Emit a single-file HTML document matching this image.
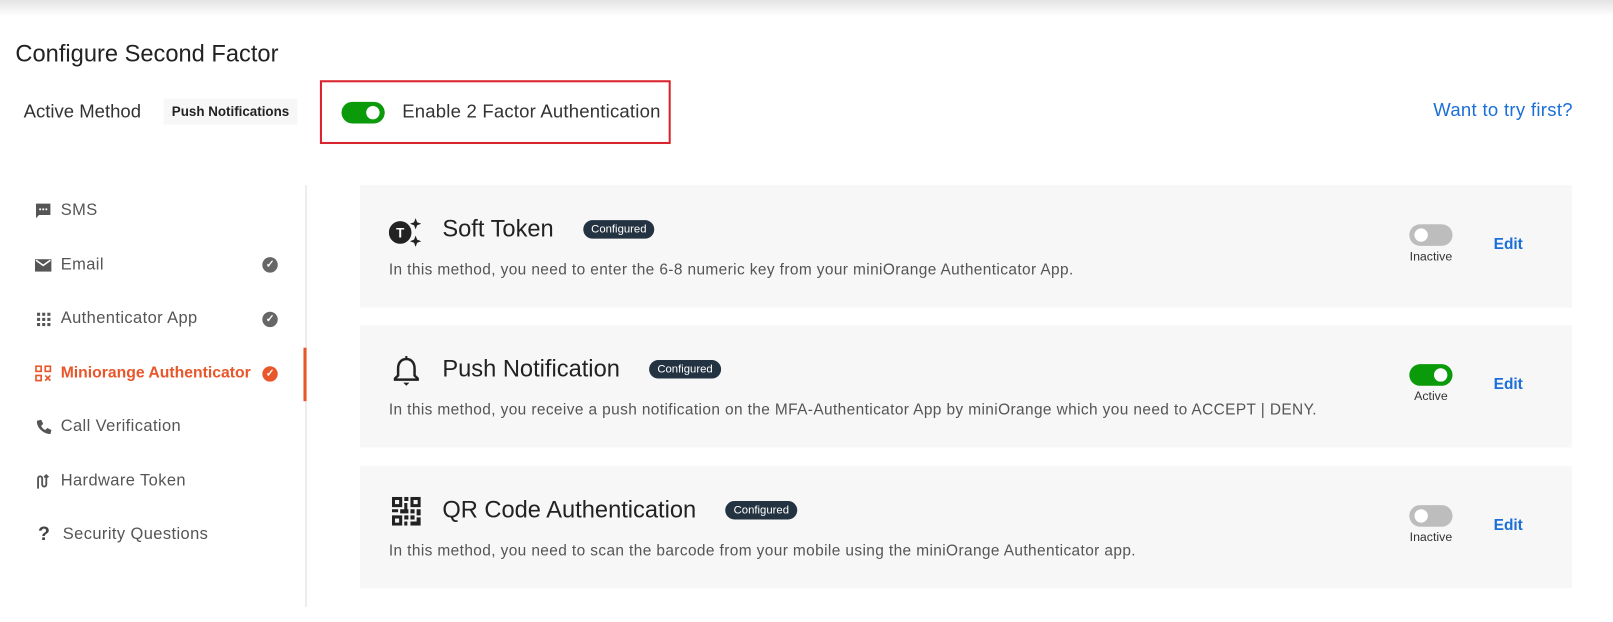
<!DOCTYPE html><html><head><style>
body{margin:0;width:1613px;height:622px;background:#fff;font-family:"Liberation Sans",sans-serif;position:relative;overflow:hidden}
#w{position:absolute;left:0;top:0;width:1568px;height:605px;transform:scale(1.0287);transform-origin:0 0}
.a{position:absolute}
.top{left:0;top:0;width:1568px;height:16px;background:linear-gradient(#e4e4e4,#fff)}
.nav{left:34px;font-size:16px;letter-spacing:.4px;color:#555;display:flex;align-items:center}
.nav svg{width:16px;height:16px;margin-right:9px}
.chk{left:255px;width:15px;height:15px;border-radius:50%;background:#666;color:#fff;font-size:10px;text-align:center;line-height:15px;font-weight:bold}
.card{left:350px;width:1178px;height:119px;background:#f7f7f7}
.ttl{left:80px;top:29px;font-size:23px;color:#222}
.bdg{background:#243342;color:#fff;font-size:11px;border-radius:10px;padding:3px 8px;letter-spacing:0}
.desc{left:28px;top:74px;font-size:15px;letter-spacing:.38px;color:#555}
.tg{left:1020px;top:38px;width:42px;height:21px;border-radius:11px;background:#bdbdbd}
.tg i{position:absolute;top:4px;left:5px;width:13px;height:13px;border-radius:50%;background:#fff}
.tg.on{background:#0a9a0a}.tg.on i{left:24px}
.st{top:62px;font-size:12px;color:#333;width:60px;text-align:center;left:1011px}
.ed{left:1102px;top:49px;color:#1a6fd8;font-weight:bold;font-size:15px}
</style></head><body><div id="w">
<div class="a top"></div>
<div class="a" style="left:15px;top:39px;font-size:23px;color:#222">Configure Second Factor</div>
<div class="a" style="left:23px;top:98px;font-size:18px;color:#333">Active Method</div>
<div class="a" style="left:159px;top:96px;padding:5px 8px;background:#f7f7f7;font-size:13px;font-weight:bold;color:#222">Push Notifications</div>
<div class="a" style="left:311px;top:78px;width:337px;height:58px;border:2px solid #d9232d"></div>
<div class="a" style="left:332px;top:99px;width:42px;height:21px;border-radius:11px;background:#0a9a0a"><i style="position:absolute;top:4px;left:24px;width:13px;height:13px;border-radius:50%;background:#fff"></i></div>
<div class="a" style="left:391px;top:98px;font-size:18px;color:#333;letter-spacing:.2px">Enable 2 Factor Authentication</div>
<div class="a" style="right:39px;top:97px;font-size:18px;color:#1a6fd8;letter-spacing:.3px">Want to try first?</div>
<div class="a" style="left:297px;top:180px;width:1px;height:410px;background:#ddd"></div>
<div class="a" style="left:295px;top:338px;width:3px;height:52px;background:#e8562a"></div>
<div class="a nav" style="top:196px"><svg viewBox="0 0 16 16"><path d="M1 1h14v11H4l-3 3z" fill="#555"/><circle cx="5" cy="6.5" r="1" fill="#fff"/><circle cx="8" cy="6.5" r="1" fill="#fff"/><circle cx="11" cy="6.5" r="1" fill="#fff"/></svg>SMS</div>
<div class="a nav" style="top:249px"><svg viewBox="0 0 16 16"><rect x="0" y="2" width="16" height="12" fill="#555"/><path d="M1 3l7 5 7-5" stroke="#fff" stroke-width="1.5" fill="none"/></svg>Email</div>
<div class="a chk" style="top:250px">✓</div>
<div class="a nav" style="top:301px"><svg viewBox="0 0 16 16" fill="#555"><rect x="2" y="2" width="3" height="3"/><rect x="7" y="2" width="3" height="3"/><rect x="12" y="2" width="3" height="3"/><rect x="2" y="7" width="3" height="3"/><rect x="7" y="7" width="3" height="3"/><rect x="12" y="7" width="3" height="3"/><rect x="2" y="12" width="3" height="3"/><rect x="7" y="12" width="3" height="3"/><rect x="12" y="12" width="3" height="3"/></svg>Authenticator App</div>
<div class="a chk" style="top:303px">✓</div>
<div class="a nav" style="top:354px;color:#e8562a;font-weight:bold;letter-spacing:0;font-size:15.3px"><svg viewBox="0 0 16 16" fill="none" stroke="#e8562a" stroke-width="1.6"><rect x="1" y="1" width="5" height="5"/><rect x="10" y="1" width="5" height="5"/><rect x="1" y="10" width="5" height="5"/><path d="M10 10l5 5M15 10l-5 5"/></svg>Miniorange Authenticator</div>
<div class="a chk" style="top:356px;background:#e8562a">✓</div>
<div class="a nav" style="top:406px"><svg viewBox="0 0 16 16"><path d="M2 2l4-1 2 4-2 2c1 2 2 3 4 4l2-2 4 2-1 4C8 15 1 8 2 2z" fill="#555"/></svg>Call Verification</div>
<div class="a nav" style="top:459px"><svg viewBox="0 0 16 16" fill="none" stroke="#555" stroke-width="1.8"><path d="M3 15V5a2 2 0 014 0v6a2 2 0 004 0V2M9 4l2-2 2 2"/></svg>Hardware Token</div>
<div class="a nav" style="top:509px;left:37px"><span style="font-size:19px;font-weight:bold;color:#444;margin-right:12px">?</span>Security Questions</div>

<div class="a card" style="top:180px">
<svg class="a" style="left:28px;top:30px" width="34" height="32" viewBox="0 0 34 32"><circle cx="11" cy="16" r="11" fill="#222"/><text x="11" y="21" font-size="13" font-weight="bold" fill="#fff" text-anchor="middle" font-family="Liberation Sans">T</text><path d="M26 2l1.5 4 4 1.5-4 1.5L26 13l-1.5-4-4-1.5 4-1.5z M26 19l1.5 4 4 1.5-4 1.5L26 30l-1.5-4-4-1.5 4-1.5z" fill="#222"/></svg>
<div class="a ttl">Soft Token <span class="bdg" style="margin-left:22px;vertical-align:4px">Configured</span></div>
<div class="a desc">In this method, you need to enter the 6-8 numeric key from your miniOrange Authenticator App.</div>
<div class="a tg"><i style="left:5px"></i></div><div class="a st">Inactive</div><div class="a ed">Edit</div></div>

<div class="a card" style="top:316px">
<svg class="a" style="left:32px;top:30px" width="26" height="30" viewBox="0 0 26 30"><path d="M13 3c-5 0-8 4-8 9v7l-3 3v1h22v-1l-3-3v-7c0-5-3-9-8-9z" fill="none" stroke="#222" stroke-width="2.4"/><path d="M10 26h6l-3 3z" fill="#222"/><rect x="12" y="0" width="2" height="4" fill="#222"/></svg>
<div class="a ttl">Push Notification <span class="bdg" style="margin-left:22px;vertical-align:4px">Configured</span></div>
<div class="a desc">In this method, you receive a push notification on the MFA-Authenticator App by miniOrange which you need to ACCEPT | DENY.</div>
<div class="a tg on"><i></i></div><div class="a st">Active</div><div class="a ed">Edit</div></div>

<div class="a card" style="top:453px">
<svg class="a" style="left:31px;top:30px" width="28" height="28" viewBox="0 0 28 28" fill="#222"><path d="M0 0h10v10H0zM3 3v4h4V3zM18 0h10v10H18zM21 3v4h4V3zM0 18h10v10H0zM3 21v4h4v-4zM12 0h4v4h-4zM12 6h3v6h-3zM0 12h6v3H0zM8 12h8v4H8zM18 12h4v4h-4zM24 12h4v6h-4zM12 18h4v4h-4zM18 18h4v4h-4zM12 24h3v4h-3zM18 24h10v4H18zM24 20h4v4h-4z"/></svg>
<div class="a ttl">QR Code Authentication <span class="bdg" style="margin-left:22px;vertical-align:4px">Configured</span></div>
<div class="a desc">In this method, you need to scan the barcode from your mobile using the miniOrange Authenticator app.</div>
<div class="a tg"><i></i></div><div class="a st">Inactive</div><div class="a ed">Edit</div></div>
</div></body></html>
